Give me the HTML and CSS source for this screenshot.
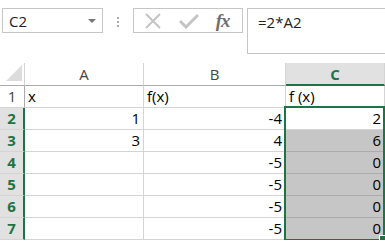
FILE: index.html
```html
<!DOCTYPE html>
<html>

<head>
    <meta charset="UTF-8">
    <title>f(x) = 2*x</title>
    <link rel="stylesheet" href="styles.css">
</head>

<body>
    <div class="bar">
        <div class="namebox">
            <span>C2</span>
            <span class="caret"></span>
        </div>
        <div class="grip"><i></i><i></i><i></i></div>
        <div class="tools">
            <svg class="icon" width="18" height="18" viewBox="0 0 18 18">
                <path d="M2 2 L16 16 M16 2 L2 16" stroke="#c4c4c4" stroke-width="2" fill="none" />
            </svg>
            <svg class="icon" width="20" height="16" viewBox="0 0 20 16">
                <path d="M1 8 L7 14 L19 2" stroke="#c4c4c4" stroke-width="3" fill="none" />
            </svg>
            <span class="fx">fx</span>
        </div>
        <div class="formula">=2*A2</div>
    </div>

    <div class="sheet">
        <!-- cabecalho -->
        <div class="hd corner">
            <svg width="16" height="16" viewBox="0 0 16 16">
                <polygon points="16,0 16,16 0,16" fill="#dcdcdc" />
            </svg>
        </div>
        <div class="hd">A</div>
        <div class="hd">B</div>
        <div class="hd sel">C</div>

        <div class="rn">1</div>
        <div class="cell">x</div>
        <div class="cell">f(x)</div>
        <div class="cell">f (x)</div>

        <div class="rn sel">2</div>
        <div class="cell num">1</div>
        <div class="cell num">-4</div>
        <div class="cell num">2</div>

        <div class="rn sel">3</div>
        <div class="cell num">3</div>
        <div class="cell num">4</div>
        <div class="cell num fill">6</div>

        <div class="rn sel">4</div>
        <div class="cell"></div>
        <div class="cell num">-5</div>
        <div class="cell num fill">0</div>

        <div class="rn sel">5</div>
        <div class="cell"></div>
        <div class="cell num">-5</div>
        <div class="cell num fill">0</div>

        <div class="rn sel">6</div>
        <div class="cell"></div>
        <div class="cell num">-5</div>
        <div class="cell num fill">0</div>

        <div class="rn sel">7</div>
        <div class="cell"></div>
        <div class="cell num">-5</div>
        <div class="cell num fill">0</div>

        <div class="selection"><span class="handle"></span></div>
    </div>
</body>

</html>
```

FILE: styles.css
```css
body {
    margin: 0;
    background-color: #fff;
    font-family: "Open Sans", Arial, sans-serif;
    overflow: hidden;
}

.bar {
    display: flex;
    align-items: flex-start;
    height: 63px;
    padding: 8px 0 0 2px;
    box-sizing: border-box;
}

.namebox {
    display: flex;
    align-items: center;
    justify-content: space-between;
    width: 101px;
    height: 25px;
    padding: 0 6px 0 6px;
    box-sizing: border-box;
    border: 1px solid #c6c6c6;
    font-size: 15px;
    color: #222;
}

.caret {
    width: 0;
    height: 0;
    border-left: 4px solid transparent;
    border-right: 4px solid transparent;
    border-top: 4px solid #777;
}

.grip {
    display: flex;
    flex-direction: column;
    align-items: center;
    gap: 2px;
    width: 30px;
    padding-top: 9px;
}

.grip i {
    width: 2px;
    height: 2px;
    background-color: #a8a8a8;
}

.tools {
    display: flex;
    align-items: center;
    justify-content: space-around;
    width: 110px;
    height: 25px;
    padding: 0 4px 0 2px;
    box-sizing: border-box;
    border: 1px solid #c6c6c6;
}

.fx {
    font-family: "Liberation Serif", serif;
    font-style: italic;
    font-weight: bold;
    font-size: 19px;
    color: #6f6f6f;
    letter-spacing: -1px;
}

.formula {
    flex: 1;
    height: 46px;
    margin-left: 4px;
    padding: 3px 0 0 10px;
    box-sizing: border-box;
    border: 1px solid #c6c6c6;
    border-right: none;
    font-size: 15px;
    color: #222;
}

.sheet {
    position: relative;
    display: grid;
    grid-template-columns: 25px 119px 142px 1fr;
    grid-template-rows: 23px repeat(7, 22px);
    font-size: 15px;
}

.hd {
    display: flex;
    align-items: center;
    justify-content: center;
    border-right: 1px solid #d4d4d4;
    border-bottom: 1px solid #ababab;
    color: #444;
    box-sizing: border-box;
}

.hd.corner {
    align-items: flex-end;
    justify-content: flex-end;
    padding: 0 2px 4px 0;
}

.hd.sel {
    background-color: #e1e1e1;
    border-bottom: 2px solid #217346;
    color: #217346;
    font-weight: bold;
}

.rn {
    display: flex;
    align-items: flex-end;
    justify-content: center;
    padding-bottom: 1px;
    border-right: 1px solid #ababab;
    border-bottom: 1px solid #d4d4d4;
    color: #444;
    box-sizing: border-box;
}

.rn.sel {
    background-color: #e1e1e1;
    border-right: 2px solid #217346;
    color: #217346;
    font-weight: bold;
}

.cell {
    display: flex;
    align-items: flex-end;
    padding: 0 3px 1px 3px;
    border-right: 1px solid #d4d4d4;
    border-bottom: 1px solid #d4d4d4;
    box-sizing: border-box;
    color: #000;
    line-height: 20px;
}

.cell.num {
    justify-content: flex-end;
}

.cell.fill {
    background-color: #c6c6c6;
    border-bottom-color: #ababab;
}

.selection {
    position: absolute;
    left: 284px;
    top: 43px;
    width: 101px;
    height: 135px;
    border: 2px solid #217346;
    box-sizing: border-box;
}

.handle {
    position: absolute;
    right: -3px;
    bottom: -3px;
    width: 5px;
    height: 5px;
    background-color: #217346;
    border: 1px solid #fff;
}
```
